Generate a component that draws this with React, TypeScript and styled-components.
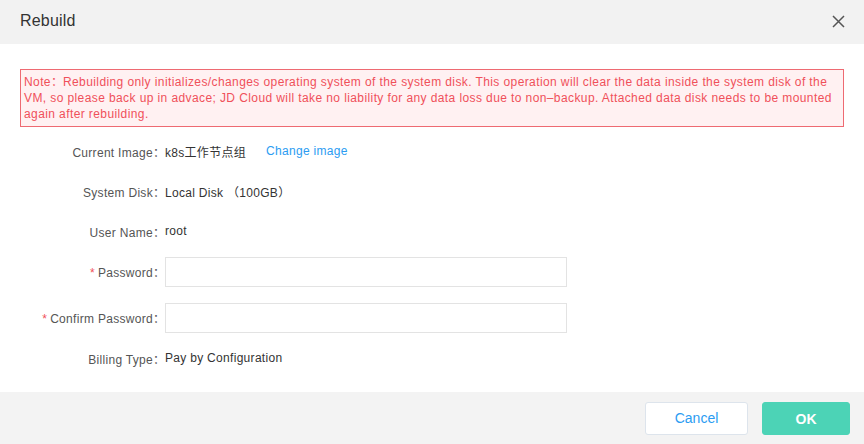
import React from 'react';
import styled, { createGlobalStyle } from 'styled-components';

const GlobalStyle = createGlobalStyle`
  html, body {
    margin: 0;
    padding: 0;
    background: #fff;
  }
  body {
    font-family: "Liberation Sans", "Noto Sans CJK SC", Arial, sans-serif;
    -webkit-font-smoothing: antialiased;
  }
`;

const Dialog = styled.div`
  width: 864px;
  height: 444px;
  display: flex;
  flex-direction: column;
  background: #fff;
`;

const Header = styled.div`
  height: 44px;
  flex-shrink: 0;
  background: #f2f2f2;
  display: flex;
  align-items: center;
  justify-content: space-between;
  padding: 0 19px 0 20px;
  box-sizing: border-box;
`;

const Title = styled.h3`
  margin: 0;
  font-size: 16px;
  font-weight: normal;
  color: #333;
  padding-bottom: 2px;
  letter-spacing: 0.2px;
`;

const CloseButton = styled.button`
  border: none;
  background: none;
  padding: 0;
  width: 14px;
  height: 14px;
  display: flex;
  align-items: center;
  justify-content: center;
  cursor: pointer;
  margin-bottom: 2px;
`;

const Body = styled.div`
  flex: 1;
  padding: 25px 20px 0 20px;
`;

const Notice = styled.div`
  border: 1px solid #ee6a72;
  background: #fff1f2;
  color: #f0505a;
  font-size: 12px;
  line-height: 16px;
  letter-spacing: 0.4px;
  padding: 3px 3px 4px 3px;
`;

const NoticeLine = styled.div`
  white-space: nowrap;
`;

const Form = styled.div`
  padding-top: 9px;
`;

const Row = styled.div<{ $gap: number }>`
  display: flex;
  align-items: center;
  min-height: 30px;
  margin-bottom: ${(p) => p.$gap}px;
  font-size: 12px;
  letter-spacing: 0.3px;
`;

const Label = styled.div`
  width: 145px;
  flex-shrink: 0;
  text-align: right;
  color: #555;
`;

const Colon = styled.span`
  font-family: "Noto Sans CJK SC", sans-serif;
  letter-spacing: 0;
`;

const Required = styled.span`
  color: #f0505a;
  margin-right: 3px;
`;

const Value = styled.div`
  color: #333;
  display: flex;
  align-items: center;
`;

const Link = styled.a`
  color: #2b9cf2;
  margin-left: 20px;
  text-decoration: none;
  cursor: pointer;
`;

const Input = styled.input`
  width: 402px;
  height: 30px;
  box-sizing: border-box;
  border: 1px solid #e3e3e3;
  outline: none;
  padding: 0 8px;
  font-size: 12px;
  margin-top: 1px;
`;

const Footer = styled.div`
  height: 52px;
  flex-shrink: 0;
  background: #f3f3f3;
  display: flex;
  justify-content: flex-end;
  align-items: center;
  gap: 14px;
  padding-right: 14px;
`;

const Button = styled.button<{ $primary?: boolean }>`
  height: 33px;
  width: ${(p) => (p.$primary ? '88px' : '103px')};
  margin-top: ${(p) => (p.$primary ? '1px' : '0')};
  border-radius: 3px;
  border: 1px solid ${(p) => (p.$primary ? '#4cd3b6' : '#dde4ec')};
  background: ${(p) => (p.$primary ? '#4cd3b6' : '#fff')};
  color: ${(p) => (p.$primary ? '#fff' : '#2b9cf2')};
  font-family: "Liberation Sans", Arial, sans-serif;
  font-size: 14px;
  font-weight: ${(p) => (p.$primary ? 'bold' : 'normal')};
  cursor: pointer;
`;

const rows = [
  { label: 'Current Image', value: 'k8s工作节点组', link: 'Change image', gap: 10 },
  { label: 'System Disk', value: 'Local Disk （100GB）', gap: 10 },
  { label: 'User Name', value: 'root', gap: 10 },
];

const App: React.FC = () => (
  <>
    <GlobalStyle />
    <Dialog>
      <Header>
        <Title>Rebuild</Title>
        <CloseButton aria-label="close">
          <svg width="13" height="13" viewBox="0 0 13 13">
            <path d="M1 1L12 12M12 1L1 12" stroke="#555" strokeWidth="1.5" fill="none" />
          </svg>
        </CloseButton>
      </Header>
      <Body>
        <Notice>
          <NoticeLine>
            Note<Colon>：</Colon>Rebuilding only initializes/changes operating system of the system disk. This operation will clear the data inside the system disk of the
          </NoticeLine>
          <NoticeLine>
            VM, so please back up in advace; JD Cloud will take no liability for any data loss due to non–backup. Attached data disk needs to be mounted
          </NoticeLine>
          <NoticeLine>again after rebuilding.</NoticeLine>
        </Notice>
        <Form>
          {rows.map((r) => (
            <Row key={r.label} $gap={r.gap}>
              <Label>
                {r.label}
                <Colon>：</Colon>
              </Label>
              <Value>
                {r.value}
                {r.link && <Link>{r.link}</Link>}
              </Value>
            </Row>
          ))}
          <Row $gap={15}>
            <Label>
              <Required>*</Required>Password<Colon>：</Colon>
            </Label>
            <Input type="password" />
          </Row>
          <Row $gap={10}>
            <Label>
              <Required>*</Required>Confirm Password<Colon>：</Colon>
            </Label>
            <Input type="password" />
          </Row>
          <Row $gap={0}>
            <Label>
              Billing Type<Colon>：</Colon>
            </Label>
            <Value>Pay by Configuration</Value>
          </Row>
        </Form>
      </Body>
      <Footer>
        <Button>Cancel</Button>
        <Button $primary>OK</Button>
      </Footer>
    </Dialog>
  </>
);

export default App;
